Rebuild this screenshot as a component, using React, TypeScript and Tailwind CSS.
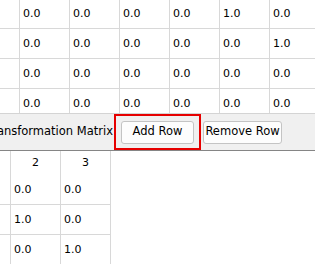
const topRows = [
  ['0.0', '0.0', '0.0', '0.0', '1.0', '0.0', '0.0'],
  ['0.0', '0.0', '0.0', '0.0', '0.0', '1.0', '0.0'],
  ['0.0', '0.0', '0.0', '0.0', '0.0', '0.0', '1.0'],
  ['0.0', '0.0', '0.0', '0.0', '0.0', '0.0', '0.0'],
]

const bottomRows = [
  ['0.0', '0.0'],
  ['1.0', '0.0'],
  ['0.0', '1.0'],
]

function Cell({ value }: { value: string }) {
  return (
    <div className="w-[50px] shrink-0 h-full border-r border-[#d8d8d8] pl-[3px] pt-[1px] flex items-center">
      {value}
    </div>
  )
}

export default function App() {
  return (
    <div className="w-[315px] h-[264px] overflow-hidden bg-white flex flex-col font-['DejaVu_Sans',sans-serif] text-[11px] text-black">
      {/* upper matrix, scrolled */}
      <div className="h-[113px] shrink-0 overflow-hidden">
        <div className="-mt-[1px] -ml-[30px] w-max">
          {topRows.map((row, i) => (
            <div key={i} className="flex h-[30px] border-b border-[#d8d8d8]">
              <Cell value="" />
              {row.map((v, j) => (
                <Cell key={j} value={v} />
              ))}
            </div>
          ))}
        </div>
      </div>

      {/* toolbar */}
      <div className="h-[38px] shrink-0 flex items-stretch bg-[#f0f0f0] border-t border-[#d4d4d4] border-b border-b-[#858585]">
        <div className="w-[113px] shrink-0 overflow-hidden flex items-center justify-end whitespace-nowrap text-[11.5px]">
          Transformation Matrix
        </div>
        <div className="ml-[1px] w-[87px] shrink-0 border-2 border-[#e60000] flex items-center px-[5px]">
          <button className="w-[73px] h-[23px] bg-[#fdfdfd] border border-[#c4c4c4] rounded-[3px] text-[11.5px]">
            Add Row
          </button>
        </div>
        <div className="flex items-center ml-[2px]">
          <button className="w-[79px] h-[23px] bg-[#fdfdfd] border border-[#c4c4c4] rounded-[3px] text-[11.5px] whitespace-nowrap">
            Remove Row
          </button>
        </div>
      </div>

      {/* lower matrix */}
      <div className="flex-1 overflow-hidden">
        <div className="-ml-[39px] w-max">
          <div className="flex h-[24px]">
            <div className="w-[50px] border-r border-[#d8d8d8]" />
            <div className="w-[50px] border-r border-[#d8d8d8] flex items-center justify-center pt-[1px]">2</div>
            <div className="w-[50px] border-r border-[#d8d8d8] flex items-center justify-center pt-[1px]">3</div>
          </div>
          {bottomRows.map((row, i) => (
            <div key={i} className="flex h-[30px] border-b border-[#d8d8d8]">
              <Cell value="" />
              {row.map((v, j) => (
                <Cell key={j} value={v} />
              ))}
            </div>
          ))}
        </div>
      </div>
    </div>
  )
}
